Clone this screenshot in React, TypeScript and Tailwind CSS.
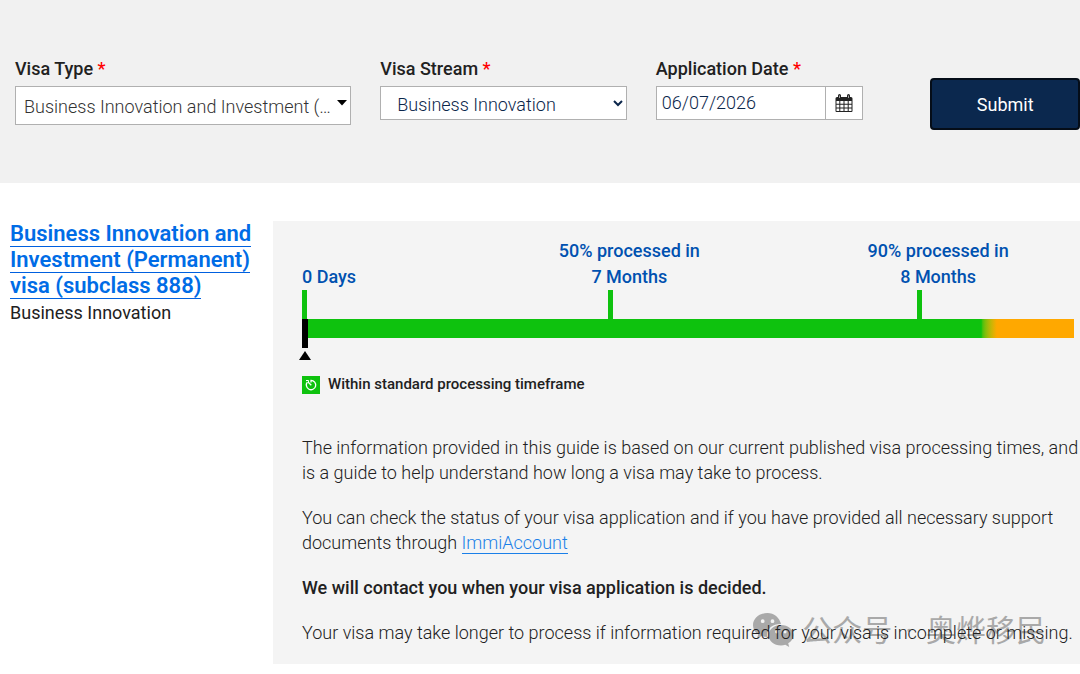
import { useState } from "react";

const milestones = [
  { title: "50% processed in", time: "7 Months" },
  { title: "90% processed in", time: "8 Months" },
];

const Required = () => <span className="text-[#ff0000]">*</span>;

const CalendarIcon = () => (
  <svg viewBox="0 0 18 19" className="h-[19px] w-[18px]" aria-hidden="true">
    <path
      fill="#222"
      fillRule="evenodd"
      d="M.5 4.500Q.5 3 2 3H3V1.500a1.500 1.500 0 0 1 3 0V3h6V1.500a1.500 1.500 0 0 1 3 0V3h1Q17.500 3 17.500 4.500V17q0 1-1 1h-15q-1 0-1-1ZM1.500 7v2.800h2.800V7Zm3.800 0v2.800h3.200V7Zm4.200 0v2.800h3.200V7Zm4.200 0v2.800h2.800V7ZM1.500 10.800v2.600h2.800v-2.600Zm3.800 0v2.600h3.200v-2.600Zm4.200 0v2.600h3.200v-2.600Zm4.200 0v2.600h2.800v-2.600ZM1.500 14.400V17h2.800v-2.600Zm3.800 0V17h3.200v-2.600Zm4.200 0V17h3.200v-2.600Zm4.200 0V17h2.800v-2.600Z"
    />
    <path
      stroke="#fff"
      strokeWidth="0.6"
      d="M4.500 1.500v2.500M13.500 1.500v2.500"
    />
  </svg>
);

const ClockIcon = () => (
  <svg
    viewBox="0 0 18 18"
    className="h-[18px] w-[18px] bg-[#0ec20e]"
    fill="none"
    stroke="#fff"
    strokeWidth="1.3"
    aria-hidden="true"
  >
    <path d="M9 6.500V4.300a4.700 4.700 0 1 1-3.600 1.700M9.300 9.300 6.500 6.500" />
    <path d="M4 4.500h2.500V7" strokeWidth="1" />
  </svg>
);

const WeChatIcon = () => (
  <svg viewBox="0 0 41 34" className="h-[34px] w-[41px]" aria-hidden="true">
    <path
      fill="currentColor"
      fillRule="evenodd"
      d="M14.500 0C6.500 0 0 5.400 0 12.200c0 3.800 2 7 5.200 9.300L4 25.600l4.700-2.500c1.800.6 3.800.9 5.600.9-1.500-7.500 4.700-13.200 13.700-13C26.600 4.500 21 0 14.500 0ZM9.700 6.300a1.900 1.900 0 1 1 0 3.800 1.900 1.900 0 0 1 0-3.800Zm9.800 0a1.900 1.900 0 1 1 0 3.800 1.900 1.900 0 0 1 0-3.800Z"
    />
    <path
      fill="currentColor"
      fillRule="evenodd"
      d="M28 12c-7 0-12.400 4.500-12.400 10.200S21 32.400 28 32.400c1.500 0 3-.3 4.300-.7L36.200 34l-1-3.700c3.200-2 5.300-4.800 5.300-8.100C40.500 16.500 35 12 28 12Zm-4.200 5.200a1.600 1.600 0 1 1 0 3.200 1.600 1.600 0 0 1 0-3.200Zm8.200 0a1.600 1.600 0 1 1 0 3.200 1.600 1.600 0 0 1 0-3.200Z"
    />
  </svg>
);

const SearchForm = () => {
  const [date, setDate] = useState("06/07/2026");
  return (
    <form
      className="grid grid-cols-[minmax(0,337fr)_minmax(0,247fr)_minmax(0,208fr)_minmax(0,188fr)] gap-x-[29px] bg-[#f1f1f1] pt-14 pb-[53px] pl-[15px]"
      onSubmit={(e) => e.preventDefault()}
    >
      <div>
        <label htmlFor="visa-type" className="block pb-[5px] font-medium">
          Visa Type <Required />
        </label>
        <div className="relative">
          <select
            id="visa-type"
            className="block h-[39px] w-full appearance-none border border-[#b0b0b0] bg-white pt-px pr-5 pl-2 font-light text-[#333]"
          >
            <option>Business Innovation and Investment (…</option>
          </select>
          <svg
            viewBox="0 0 10 6"
            className="pointer-events-none absolute top-[14px] right-[4px] h-[6px] w-[10px]"
            aria-hidden="true"
          >
            <path d="M0 0h10L5 5.500Z" />
          </svg>
        </div>
      </div>
      <div>
        <label htmlFor="visa-stream" className="block pb-[5px] font-medium">
          Visa Stream <Required />
        </label>
        <div className="relative">
          <select
            id="visa-stream"
            className="block h-[34px] w-full appearance-none border border-[#b0b0b0] bg-white pt-[2px] pl-4 font-light text-[#0b264b]"
          >
            <option>Business Innovation</option>
          </select>
          <svg
            viewBox="0 0 10 7"
            className="pointer-events-none absolute top-[14px] right-[4px] h-[7px] w-[10px]"
            fill="none"
            stroke="#0b264b"
            strokeWidth="2"
            aria-hidden="true"
          >
            <path d="m1 1 4 4 4-4" />
          </svg>
        </div>
      </div>
      <div>
        <label htmlFor="date" className="block pb-[5px] font-medium">
          Application Date <Required />
        </label>
        <div className="flex h-[34px] border border-[#b0b0b0] bg-white">
          <input
            id="date"
            type="text"
            value={date}
            onChange={(e) => setDate(e.target.value)}
            className="min-w-0 flex-1 pb-[2px] pl-[5px] font-light text-[#0b264b]"
          />
          <button
            type="button"
            aria-label="Choose date"
            className="flex w-[37px] items-center justify-center border-l border-[#b0b0b0]"
          >
            <CalendarIcon />
          </button>
        </div>
      </div>
      <div className="pt-[22px] pl-[38px]">
        <button
          type="submit"
          className="h-[52px] w-full rounded-sm border-2 border-[#050d18] bg-[#0b284e] text-white"
        >
          Submit
        </button>
      </div>
    </form>
  );
};

const Timeline = () => {
  return (
    <div className="pr-[6px]">
      <div className="grid grid-cols-[2fr_2fr_1fr] items-end leading-[26px] font-medium text-[#0051b0]">
        <div>
          <p>0 Days</p>
          <div className="h-[29px] w-[5px] bg-[#0ec20e]"></div>
        </div>
        {milestones.map((item) => (
          <div key={item.title}>
            <p className="-ml-[52px] w-max text-center">
              {item.title}
              <br />
              {item.time}
            </p>
            <div className="-ml-[3px] h-[29px] w-[5px] bg-[#0ec20e]"></div>
          </div>
        ))}
      </div>
      <div className="relative h-[19px] bg-linear-to-r from-[#0ec20e] from-88% to-[#ffa800] to-90%">
        <div className="absolute top-0 left-0 h-[29px] w-[6px] bg-black"></div>
        <svg
          viewBox="0 0 12 9"
          className="absolute top-[32px] -left-[3px] h-[9px] w-[12px]"
          aria-hidden="true"
        >
          <path d="M6 0 12 9H0Z" />
        </svg>
      </div>
    </div>
  );
};

export default function App() {
  return (
    <div className="min-h-screen overflow-x-clip bg-white font-['Roboto','Noto_Sans_CJK_SC',sans-serif] text-lg leading-[25px] text-[#212121]">
      <SearchForm />
      <main className="flex pt-[38px]">
        <aside className="w-[273px] shrink-0 pl-[10px]">
          <h2 className="text-[22px] leading-[26px] font-semibold">
            <a
              href="#"
              className="border-b border-[#0060df] text-[#006ce6]"
            >
              Business Innovation and Investment (Permanent) visa (subclass 888)
            </a>
          </h2>
          <p className="pt-px">Business Innovation</p>
        </aside>
        <section className="relative min-w-0 flex-1 bg-[#f4f4f4] pt-[17px] pb-[19px] pl-[29px]">
          <Timeline />
          <div className="mt-[34px] flex items-center gap-2 text-[15px] font-medium">
            <ClockIcon />
            <span>Within standard processing timeframe</span>
          </div>
          <div className="pointer-events-none absolute right-[34px] bottom-[17px] flex items-center gap-2 text-[30px] text-[#a9a9a9]">
            <WeChatIcon />
            <span className="flex gap-[13px]">
              <span>公众号</span>
              <span>·</span>
              <span>奥烨移民</span>
            </span>
          </div>
          <div className="relative mt-[38px] space-y-5 font-light">
            <p>
              The information provided in this guide is based on our current
              published visa processing times, and is a guide to help understand
              how long a visa may take to process.
            </p>
            <p>
              You can check the status of your visa application and if you have
              provided all necessary support documents through{" "}
              <a href="#" className="border-b border-[#1a7fe8] text-[#1a7fe8]">
                ImmiAccount
              </a>
            </p>
            <p className="font-medium">
              We will contact you when your visa application is decided.
            </p>
            <p>
              Your visa may take longer to process if information required for
              your visa is incomplete or missing.
            </p>
          </div>
        </section>
      </main>
    </div>
  );
}
